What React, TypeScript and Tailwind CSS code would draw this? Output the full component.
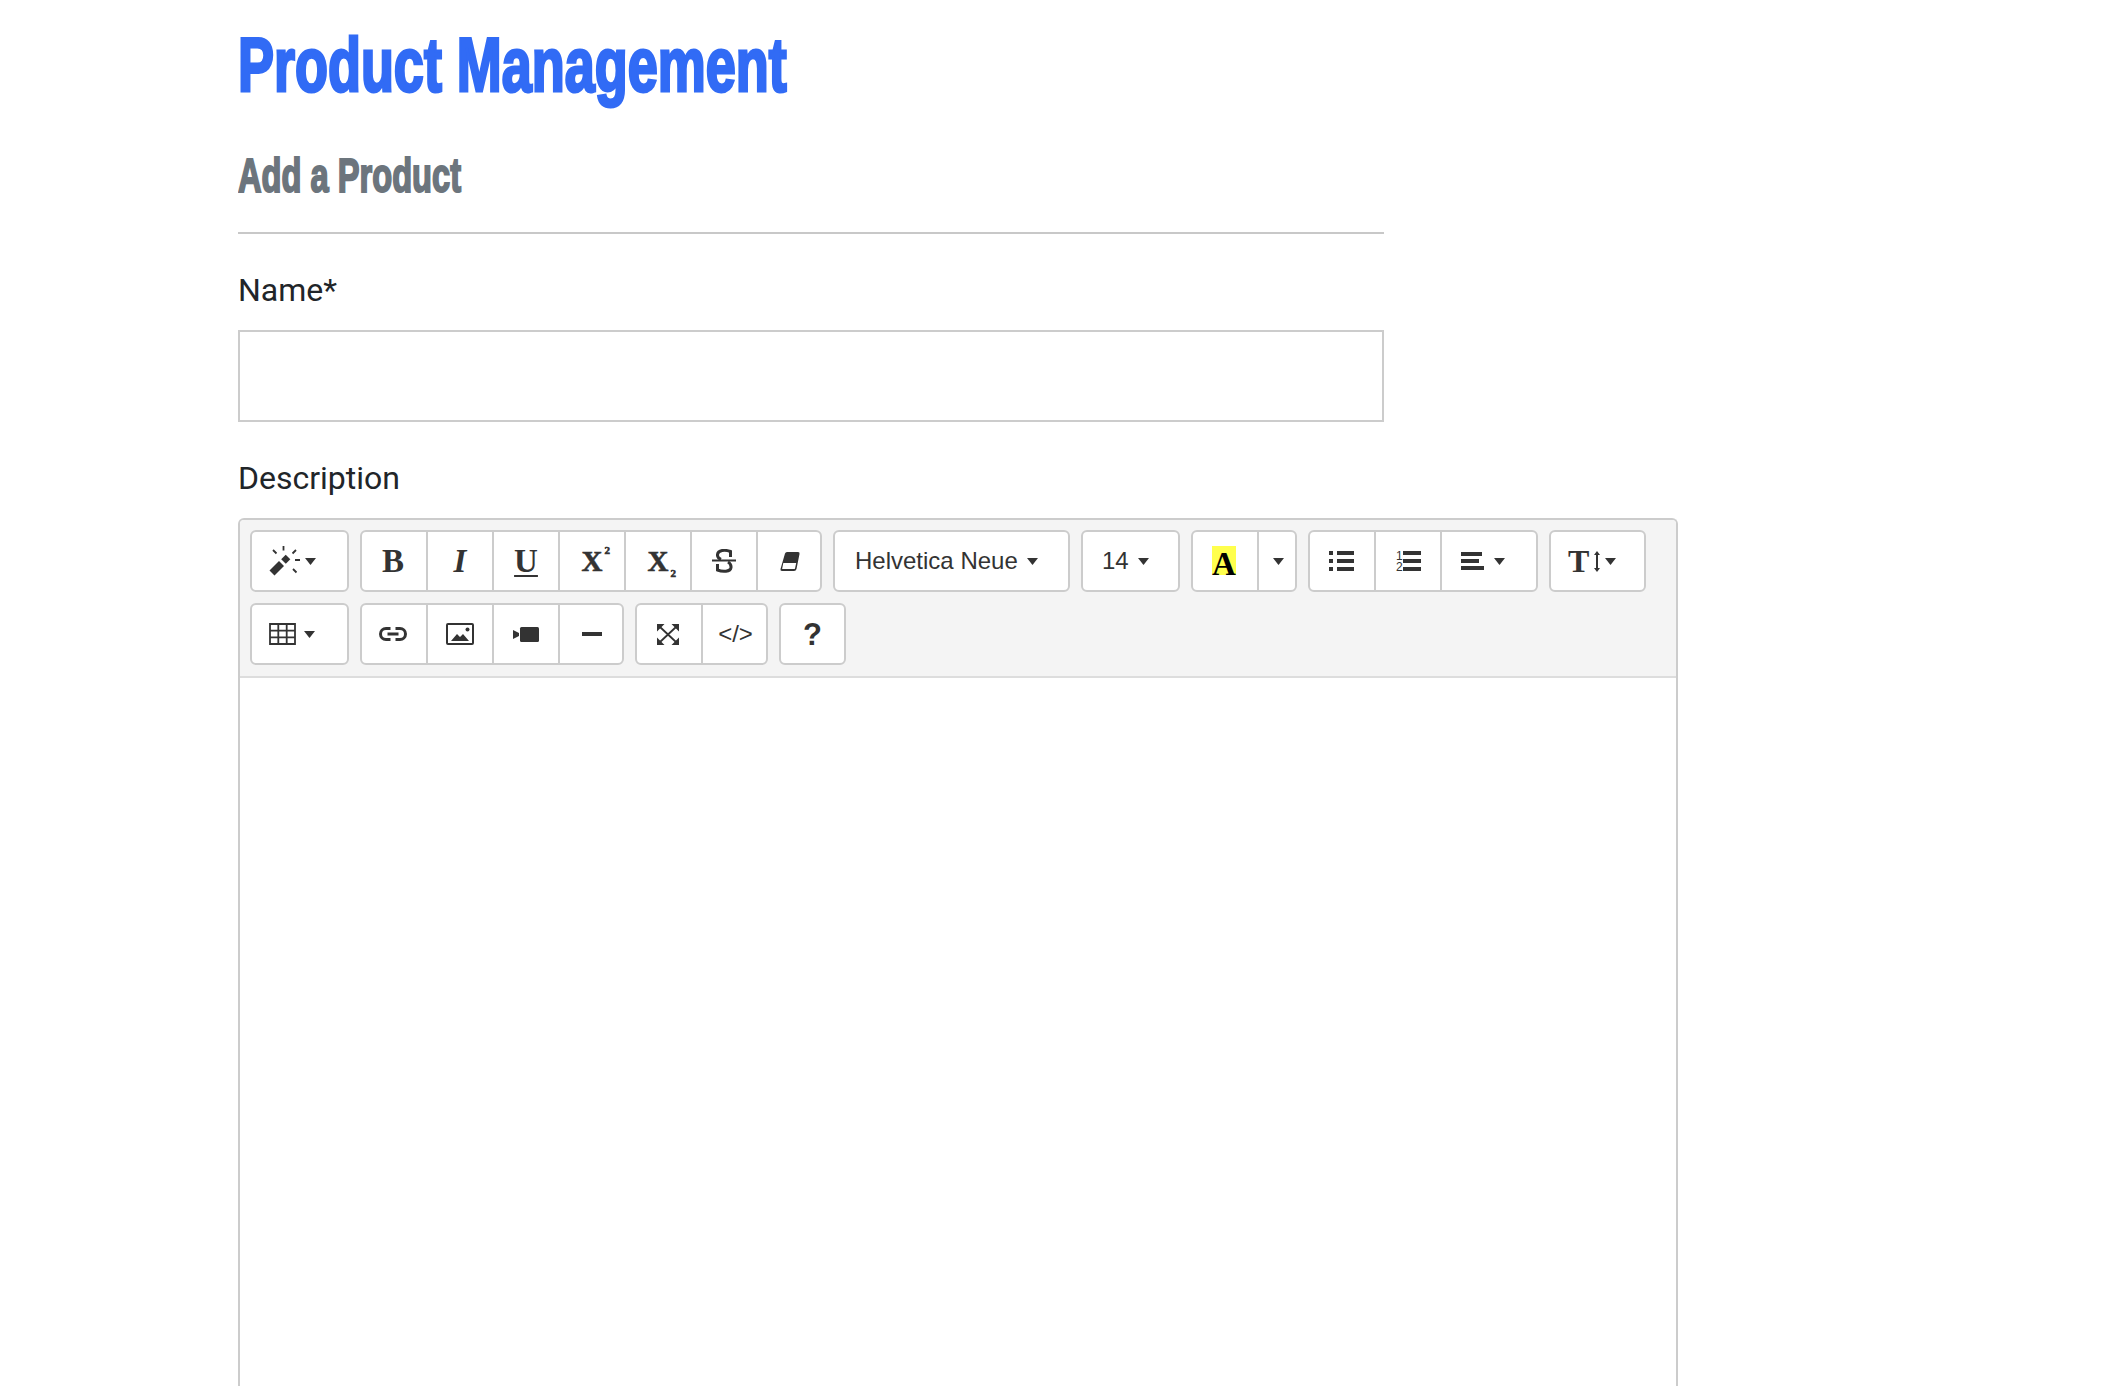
import React from "react";

const Caret = () => (
  <svg width="11" height="7" viewBox="0 0 11 7" className="shrink-0">
    <path d="M0 0h11L5.500 7z" fill="#333" />
  </svg>
);

function Btn({ w = "w-[66px]", children, className = "" }: { w?: string; children?: React.ReactNode; className?: string }) {
  return (
    <div className={`${w} ${className} h-full shrink-0 flex items-center justify-center border-l-2 border-[#ccc] first:border-l-0 first:ml-[-2px] last:mr-[-2px]`}>
      {children}
    </div>
  );
}

function Group({ children }: { children: React.ReactNode }) {
  return <div className="flex h-[62px] rounded-[6px] border-2 border-[#ccc] bg-white overflow-hidden">{children}</div>;
}

const Serif = ({ children, className = "" }: { children: React.ReactNode; className?: string }) => (
  <span className={`font-['Liberation_Serif',serif] font-bold text-[#333] leading-none ${className}`}>{children}</span>
);

const Wand = () => (
  <svg width="31" height="30" viewBox="0 0 31 30" fill="none" stroke="#333">
    <path d="M3 27l9.500-9.500" strokeWidth="7" />
    <path d="M14.500 15.500l4.500-4.500" strokeWidth="6.500" />
    <path d="M14.500 0v4.500M4 4l3.500 3.500M27 4l-3.500 3.500M26 14h5M24 23l3.500 3.500" strokeWidth="1.800" />
  </svg>
);

const TableIcon = () => (
  <svg width="27" height="22" viewBox="0 0 27 22" fill="none" stroke="#333" strokeWidth="1.800">
    <path d="M1 1h25v20H1zM1 7.700h25M1 14.300h25M9.300 1v20M17.700 1v20" />
  </svg>
);

const LinkIcon = () => (
  <svg width="28" height="14" viewBox="0 0 28 14" fill="none" stroke="#333" strokeWidth="3">
    <path d="M11.500 1.500H7a5.500 5.500 0 0 0 0 11h4.500M16.500 1.500H21a5.500 5.500 0 0 1 0 11h-4.500M8.500 7h11" />
  </svg>
);

const ImageIcon = () => (
  <svg width="28" height="22" viewBox="0 0 28 22">
    <rect x="1" y="1" width="26" height="20" rx="1" fill="none" stroke="#333" strokeWidth="2" />
    <path d="M5 18l6-7 3 3 3-3 6 7z" fill="#333" />
    <circle cx="21.500" cy="6.500" r="2" fill="#333" />
  </svg>
);

const VideoIcon = () => (
  <svg width="26" height="15" viewBox="0 0 26 15" fill="#333">
    <path d="M0 3l6 3v3l-6 3z" />
    <rect x="7" y="0" width="19" height="15" rx="1.500" />
  </svg>
);

const Expand = () => (
  <svg width="22" height="21" viewBox="0 0 22 21" fill="#333">
    <path d="M0 0h7.500L0 7.500zM22 0h-7.500L22 7.500zM0 21h7.500L0 13.500zM22 21h-7.500L22 13.500z" />
    <path d="M3 3l16 15M19 3L3 18" strokeWidth="1.800" stroke="#333" fill="none" />
  </svg>
);

const Eraser = () => (
  <svg width="20" height="19" viewBox="0 0 20 19">
    <path d="M5 1.500Q5.500 0 7 0h11q2 0 1.500 2l-3 15q-.5 2-2.500 2H2q-2 0-1.500-2z" fill="#333" />
    <path d="M3.300 11h12.900l-1.200 5.500q-.2.500-1 .5H2.500q-.5 0-.3-.5z" fill="#fff" />
  </svg>
);

const Strike = () => (
  <svg width="24" height="24" viewBox="0 0 24 24" fill="none" stroke="#333">
    <path d="M0 11.500h24" strokeWidth="2" />
    <path d="M18.500 8V2.500C13 .5 6 1 5.500 5.500 5.300 7.500 6.500 9.500 9 10.500" strokeWidth="3" />
    <path d="M5.500 15v6c5 2 13 2 13.500-2.500.2-2-.5-4-3-5.500" strokeWidth="3" />
  </svg>
);

const UlIcon = () => (
  <svg width="25" height="20" viewBox="0 0 25 20" fill="#333">
    <path d="M0 0h4v4H0zM0 8h4v4H0zM0 16h4v4H0zM8 0h17v4H8zM8 8h17v4H8zM8 16h17v4H8z" />
  </svg>
);

const OlIcon = () => (
  <svg width="26" height="28" viewBox="0 -3 26 28" fill="#333">
    <path d="M8 1h18v4H8zM8 9h18v4H8zM8 17h18v4H8z" />
    <text x="1" y="10" fontSize="12" fontFamily="Liberation Sans, sans-serif">1</text>
    <text x="1" y="21" fontSize="12" fontFamily="Liberation Sans, sans-serif">2</text>
  </svg>
);

const AlignIcon = () => (
  <svg width="23" height="18" viewBox="0 0 23 18" fill="#333">
    <path d="M0 0h21v4H0zM0 7h18v4H0zM0 14h23v4H0z" />
  </svg>
);

const TextHeight = () => (
  <svg width="6" height="21" viewBox="0 0 6 21" fill="#333">
    <path d="M3 0l3 4H4v13h2l-3 4-3-4h2V4H0z" />
  </svg>
);

export default function App() {
  return (
    <div className="h-[1386px] overflow-hidden bg-white pl-[238px] font-['Roboto',sans-serif] text-[#212529]">
      <h1 className="pt-[23px] h-[95px] w-max origin-left scale-x-[0.71] font-['Liberation_Sans',sans-serif] font-bold text-[76px] leading-[83px] text-[#316bf5] whitespace-nowrap [-webkit-text-stroke:3px_#316bf5]">
        Product Management
      </h1>
      <h3 className="mt-[56px] h-[50px] w-max origin-left scale-x-[0.68] font-['Liberation_Sans',sans-serif] font-bold text-[48px] leading-[50px] text-[#6c757d] whitespace-nowrap [-webkit-text-stroke:2px_#6c757d]">
        Add a Product
      </h3>
      <div className="mt-[31px] w-[1146px] h-[2px] bg-[#c8c8c8]" />
      <label className="block mt-[37px] text-[32px] leading-[38px]">Name*</label>
      <div className="mt-[21px] w-[1146px] h-[92px] border-2 border-[#ccc] bg-white" />
      <label className="block mt-[37px] text-[32px] leading-[38px]">Description</label>
      <div className="mt-[21px] w-[1440px] h-[900px] rounded-t-[6px] border-2 border-[#ccc] border-b-0">
        <div className="bg-[#f4f4f4] rounded-t-[4px] border-b-2 border-[#ddd] pl-[10px] pt-[10px] h-[158px] flex flex-col gap-[11px]">
          <div className="flex gap-[11px]">
            <Group>
              <Btn w="w-[99px]" className="gap-[5px] !justify-start pl-[19px]">
                <Wand />
                <Caret />
              </Btn>
            </Group>
            <Group>
              <Btn>
                <Serif className="text-[33px]">B</Serif>
              </Btn>
              <Btn>
                <Serif className="text-[33px] italic">I</Serif>
              </Btn>
              <Btn>
                <Serif className="text-[33px] underline decoration-2 underline-offset-[3px]">U</Serif>
              </Btn>
              <Btn>
                <Serif className="text-[29px] relative [-webkit-text-stroke:0.6px_#333]">
                  X<span className="absolute top-[-2px] left-[23px] text-[11px]">2</span>
                </Serif>
              </Btn>
              <Btn>
                <Serif className="text-[29px] relative [-webkit-text-stroke:0.6px_#333]">
                  X<span className="absolute bottom-[-3px] left-[23px] text-[11px]">2</span>
                </Serif>
              </Btn>
              <Btn>
                <Strike />
              </Btn>
              <Btn>
                <Eraser />
              </Btn>
            </Group>
            <Group>
              <Btn w="w-[237px]" className="text-[24px] font-['Liberation_Sans',sans-serif] text-[#333] gap-[9px] !justify-start pl-[22px]">
                Helvetica Neue
                <Caret />
              </Btn>
            </Group>
            <Group>
              <Btn w="w-[99px]" className="text-[24px] font-['Liberation_Sans',sans-serif] text-[#333] gap-[9px] !justify-start pl-[21px]">
                14
                <Caret />
              </Btn>
            </Group>
            <Group>
              <Btn>
                <div className="w-[24px] h-[29px] -mt-[2px] bg-[#ffff4d] flex items-end justify-center">
                  <span className="font-['Liberation_Serif',serif] font-bold text-[33px] leading-[22px] text-black">A</span>
                </div>
              </Btn>
              <Btn w="w-[40px]">
                <Caret />
              </Btn>
            </Group>
            <Group>
              <Btn>
                <UlIcon />
              </Btn>
              <Btn>
                <OlIcon />
              </Btn>
              <Btn w="w-[98px]" className="gap-[10px] !justify-start pl-[19px]">
                <AlignIcon />
                <Caret />
              </Btn>
            </Group>
            <Group>
              <Btn w="w-[97px]" className="gap-[5px] !justify-start pl-[19px]">
                <Serif className="text-[32px]">T</Serif>
                <TextHeight />
                <Caret />
              </Btn>
            </Group>
          </div>
          <div className="flex gap-[11px]">
            <Group>
              <Btn w="w-[99px]" className="gap-[8px] !justify-start pl-[19px]">
                <TableIcon />
                <Caret />
              </Btn>
            </Group>
            <Group>
              <Btn>
                <LinkIcon />
              </Btn>
              <Btn>
                <ImageIcon />
              </Btn>
              <Btn>
                <VideoIcon />
              </Btn>
              <Btn>
                <div className="w-[20px] h-[4px] bg-[#333]" />
              </Btn>
            </Group>
            <Group>
              <Btn>
                <Expand />
              </Btn>
              <Btn w="w-[67px]" className="text-[24px] font-['Liberation_Sans',sans-serif] text-[#333]">&lt;/&gt;</Btn>
            </Group>
            <Group>
              <Btn w="w-[67px]">
                <span className="font-['Liberation_Sans',sans-serif] font-bold text-[31px] text-[#333] leading-none">?</span>
              </Btn>
            </Group>
          </div>
        </div>
      </div>
    </div>
  );
}
